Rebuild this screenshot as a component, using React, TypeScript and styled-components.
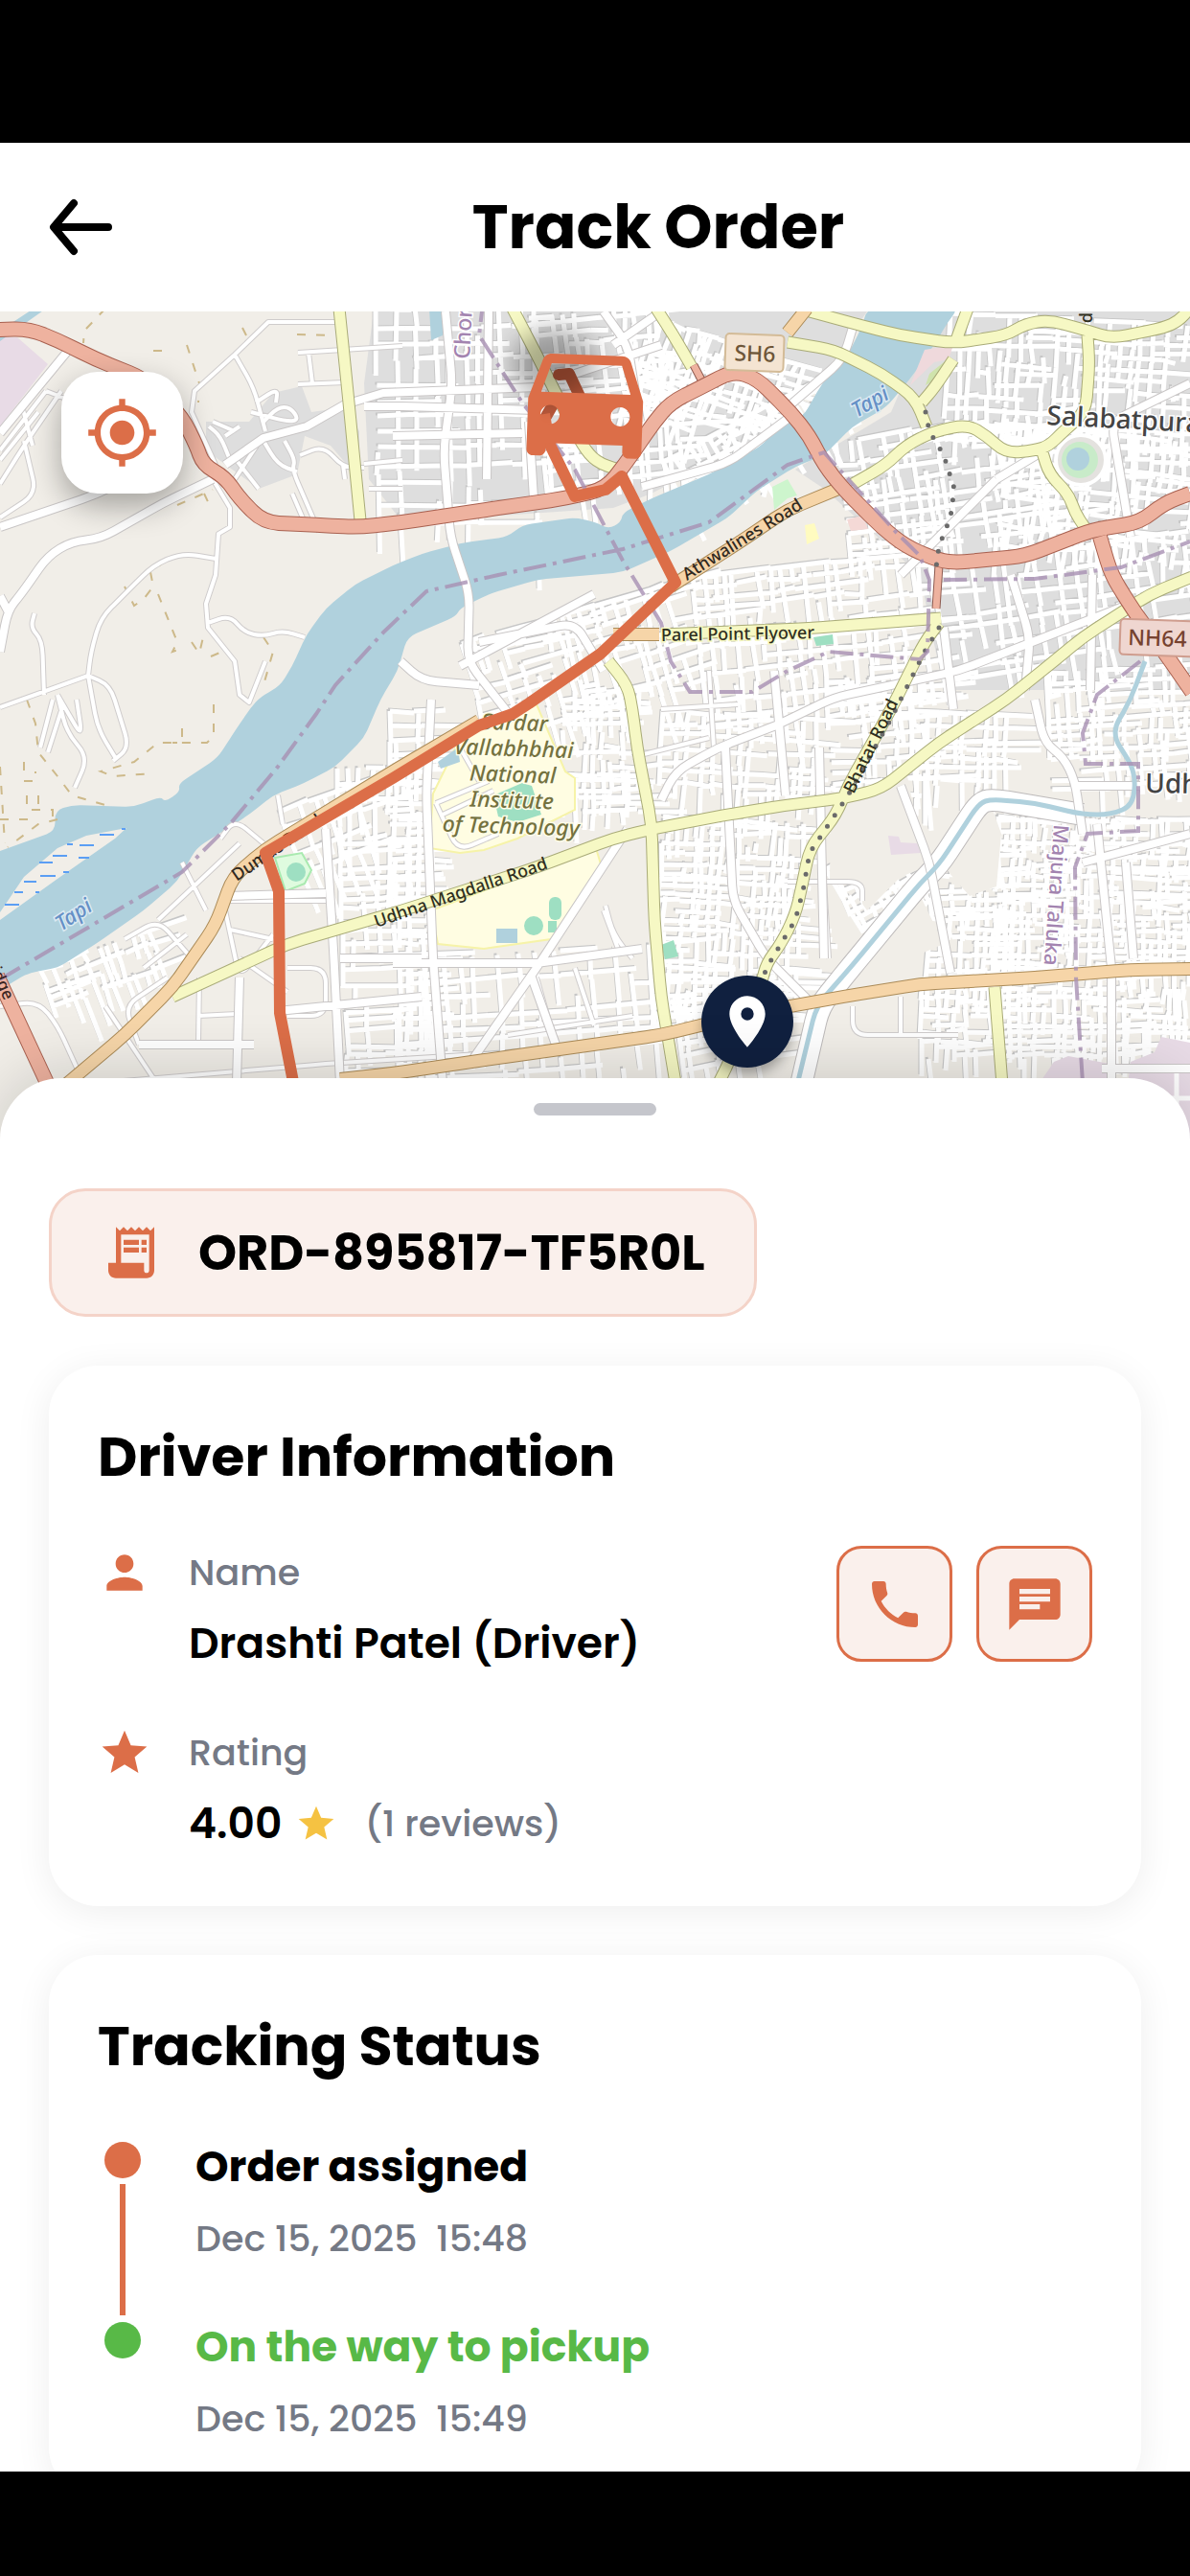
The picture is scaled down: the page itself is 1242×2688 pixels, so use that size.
import React from "react";
import styled, { createGlobalStyle } from "styled-components";
import {
  MdChat,
  MdDirectionsCar,
  MdLocationOn,
  MdMyLocation,
  MdPerson,
  MdPhone,
  MdReceiptLong,
  MdStar,
} from "react-icons/md";

const color = {
  accent: "#dc6e48",
  accentSoft: "#faf0ec",
  accentLine: "#f4d3c8",
  ink: "#000000",
  muted: "#747985",
  success: "#58b947",
  gold: "#f5c242",
  navy: "#10203f",
  handle: "#c5c6cc",
};

const GlobalStyle = createGlobalStyle`
  *, *::before, *::after { box-sizing: border-box; }
  body { margin: 0; background: #000; }
  button { font: inherit; cursor: pointer; }
  h1, h2, p, dl, dt, dd, ol { margin: 0; padding: 0; }
`;

const Screen = styled.div`
  display: flex;
  flex-direction: column;
  height: 100vh;
  overflow: hidden;
  background: #fff;
  color: ${color.ink};
  font-family: Poppins, Inter, "Noto Sans", sans-serif;
`;

const SystemBar = styled.div<{ $size: number }>`
  flex: none;
  height: ${(p) => p.$size}px;
  background: #000;
`;

const Header = styled.header`
  flex: none;
  display: flex;
  align-items: center;
  height: 176px;
  background: #fff;
`;

const BackButton = styled.button`
  display: flex;
  align-items: center;
  width: 132px;
  height: 100%;
  padding: 0 0 0 51px;
  border: 0;
  background: none;
  color: ${color.ink};
`;

const PageTitle = styled.h1`
  flex: 1;
  text-align: center;
  font-size: 64px;
  line-height: 88px;
  font-weight: 700;
`;

const MapArea = styled.section`
  flex: none;
  position: relative;
  height: 864px;
  margin-bottom: -64px;
  overflow: hidden;
  background: #f1eee8;
`;

const MapSvg = styled.svg`
  display: block;
  width: 100%;
  height: 100%;
`;

const LocateButton = styled.button`
  position: absolute;
  top: 63px;
  left: 64px;
  display: flex;
  align-items: center;
  justify-content: center;
  width: 127px;
  height: 127px;
  padding: 0;
  border: 0;
  border-radius: 38px;
  background: #fff;
  color: ${color.accent};
  box-shadow: 0 13px 32px rgba(0, 0, 0, 0.32);
`;

const Sheet = styled.main`
  flex: 1;
  min-height: 0;
  position: relative;
  overflow: hidden;
  padding: 26px 51px 0;
  border-radius: 64px 64px 0 0;
  background: #fff;
  box-shadow: 0 -6px 64px rgba(0, 0, 0, 0.16);
`;

const Handle = styled.div`
  width: 128px;
  height: 13px;
  margin: 0 auto 76px;
  border-radius: 7px;
  background: ${color.handle};
`;

const SheetBody = styled.div`
  display: flex;
  flex-direction: column;
  align-items: stretch;
  gap: 51px;
`;

const OrderChip = styled.div`
  align-self: flex-start;
  display: flex;
  align-items: center;
  gap: 38px;
  height: 134px;
  padding: 0 51px;
  border: 3px solid ${color.accentLine};
  border-radius: 38px;
  background: ${color.accentSoft};
  font-size: 51px;
  line-height: 66px;
  font-weight: 700;

  svg { color: ${color.accent}; }
`;

const Card = styled.section`
  padding: 51px 51px 53px;
  border-radius: 51px;
  background: #fff;
  box-shadow: 0 6px 38px rgba(0, 0, 0, 0.07);
`;

const CardTitle = styled.h2`
  margin-bottom: 49px;
  font-size: 57px;
  line-height: 88px;
  font-weight: 700;
`;

const DriverBody = styled.div`
  display: flex;
  justify-content: space-between;
  align-items: flex-start;
`;

const Facts = styled.dl`
  display: flex;
  flex-direction: column;
  gap: 53px;
`;

const Fact = styled.div`
  display: grid;
  grid-template-columns: 56px auto;
  column-gap: 39px;
  row-gap: 13px;

  > svg { color: ${color.accent}; }
`;

const Label = styled.dt`
  font-size: 38px;
  line-height: 56px;
  font-weight: 500;
  color: ${color.muted};
`;

const Value = styled.dd`
  grid-column: 2;
  display: flex;
  align-items: center;
  gap: 14px;
  font-size: 44px;
  line-height: 66px;
  font-weight: 600;

  svg { color: ${color.gold}; }
`;

const Reviews = styled.span`
  margin-left: 14px;
  font-size: 38px;
  font-weight: 500;
  color: ${color.muted};
`;

const Actions = styled.div`
  display: flex;
  gap: 25px;
`;

const ActionButton = styled.button`
  display: flex;
  align-items: center;
  justify-content: center;
  width: 121px;
  height: 121px;
  padding: 0;
  border: 3px solid ${color.accent};
  border-radius: 26px;
  background: ${color.accentSoft};
  color: ${color.accent};
`;

const Timeline = styled.ol`
  list-style: none;
`;

const Step = styled.li`
  display: flex;
  gap: 51px;
`;

const Rail = styled.div`
  display: flex;
  flex-direction: column;
  align-items: center;
  gap: 6px;
  width: 51px;
  padding-top: 7px;
`;

const Dot = styled.span<{ $done: boolean }>`
  width: 38px;
  height: 38px;
  border-radius: 50%;
  background: ${(p) => (p.$done ? color.accent : color.success)};
`;

const Connector = styled.span`
  flex: 1;
  width: 6px;
  background: ${color.accent};
`;

const StepText = styled.div<{ $last: boolean }>`
  display: flex;
  flex-direction: column;
  gap: 14px;
  padding-bottom: ${(p) => (p.$last ? 0 : 52)}px;
`;

const StepName = styled.p<{ $done: boolean }>`
  font-size: 44px;
  line-height: 66px;
  font-weight: 700;
  color: ${(p) => (p.$done ? color.ink : color.success)};
`;

const StepTime = styled.time`
  font-size: 38px;
  line-height: 56px;
  font-weight: 500;
  white-space: pre;
  color: ${color.muted};
`;

/* ---------- map drawing ---------- */

function random(seed: number) {
  let s = seed;
  return () => {
    s = (s * 1664525 + 1013904223) % 4294967296;
    return s / 4294967296;
  };
}

type District = { x: number; y: number; w: number; h: number; angle: number; step: number; seed: number };

/** Broken, jittered grid of lanes that fills one district. */
function lanes({ w, h, step, seed }: District) {
  const r = random(seed);
  let d = "";
  for (let a = 0; a < h; a += step * (0.55 + r() * 0.9)) {
    for (let b = 0; b < w; ) {
      const len = step * (1 + r() * 5);
      if (r() > 0.2) d += `M${b.toFixed(0)} ${a.toFixed(0)}l${len.toFixed(0)} ${(r() * 6 - 3).toFixed(0)}`;
      b += len;
    }
  }
  for (let a = 0; a < w; a += step * (0.55 + r() * 0.9)) {
    for (let b = 0; b < h; ) {
      const len = step * (1 + r() * 4);
      if (r() > 0.25) d += `M${a.toFixed(0)} ${b.toFixed(0)}l${(r() * 6 - 3).toFixed(0)} ${len.toFixed(0)}`;
      b += len;
    }
  }
  return d;
}

type Point = [number, number];

/** Rounds the corners of a polyline path that uses M, H, V and plain points. */
function rounded(d: string, radius = 16) {
  const tokens = d.match(/[MHVZ]|-?\d+/g) ?? [];
  const runs: Point[][] = [];
  let closed = "";
  for (let i = 0; i < tokens.length; ) {
    const t = tokens[i];
    const run = runs[runs.length - 1];
    if (t === "M") {
      runs.push([]);
      i += 1;
    } else if (t === "H") {
      run.push([Number(tokens[i + 1]), run[run.length - 1][1]]);
      i += 2;
    } else if (t === "V") {
      run.push([run[run.length - 1][0], Number(tokens[i + 1])]);
      i += 2;
    } else if (t === "Z") {
      closed = "Z";
      i += 1;
    } else {
      run.push([Number(t), Number(tokens[i + 1])]);
      i += 2;
    }
  }
  const toward = (from: Point, to: Point): Point => {
    const dist = Math.hypot(to[0] - from[0], to[1] - from[1]) || 1;
    const k = Math.min(radius, dist / 2) / dist;
    return [from[0] + (to[0] - from[0]) * k, from[1] + (to[1] - from[1]) * k];
  };
  const put = (p: Point) => `${p[0].toFixed(1)} ${p[1].toFixed(1)}`;
  return runs
    .map((pts) => {
      let out = `M${put(pts[0])}`;
      for (let i = 1; i < pts.length - 1; i++) {
        out += `L${put(toward(pts[i], pts[i - 1]))}Q${put(pts[i])} ${put(toward(pts[i], pts[i + 1]))}`;
      }
      return `${out}L${put(pts[pts.length - 1])}${closed}`;
    })
    .join("");
}

const districts: District[] = [
  { x: 390, y: 320, w: 170, h: 225, angle: -1, step: 17, seed: 3 },
  { x: 550, y: 330, w: 150, h: 190, angle: -6, step: 12, seed: 7 },
  { x: 680, y: 330, w: 170, h: 110, angle: 18, step: 10, seed: 11 },
  { x: 690, y: 480, w: 190, h: 60, angle: -28, step: 10, seed: 13 },
  { x: 990, y: 325, w: 260, h: 130, angle: 3, step: 10, seed: 17 },
  { x: 870, y: 460, w: 220, h: 120, angle: -8, step: 11, seed: 19 },
  { x: 1050, y: 440, w: 210, h: 130, angle: 6, step: 10, seed: 23 },
  { x: 720, y: 600, w: 260, h: 160, angle: -6, step: 12, seed: 29 },
  { x: 970, y: 590, w: 280, h: 130, angle: -8, step: 15, seed: 31 },
  { x: 480, y: 670, w: 230, h: 110, angle: -16, step: 11, seed: 37 },
  { x: 405, y: 740, w: 50, h: 200, angle: 0, step: 11, seed: 41 },
  { x: 415, y: 955, w: 45, h: 175, angle: 0, step: 12, seed: 42 },
  { x: 585, y: 720, w: 85, h: 130, angle: 0, step: 10, seed: 43 },
  { x: 690, y: 740, w: 165, h: 90, angle: 3, step: 12, seed: 47 },
  { x: 690, y: 850, w: 150, h: 210, angle: 3, step: 9, seed: 48 },
  { x: 350, y: 800, w: 90, h: 330, angle: -2, step: 13, seed: 53 },
  { x: 290, y: 845, w: 90, h: 80, angle: -20, step: 14, seed: 59 },
  { x: 440, y: 1000, w: 250, h: 130, angle: -4, step: 18, seed: 61 },
  { x: 860, y: 710, w: 110, h: 110, angle: -4, step: 11, seed: 67 },
  { x: 950, y: 740, w: 110, h: 90, angle: 2, step: 12, seed: 71 },
  { x: 1090, y: 700, w: 160, h: 130, angle: -3, step: 10, seed: 73 },
  { x: 1040, y: 850, w: 210, h: 170, angle: 1, step: 8, seed: 79 },
  { x: 860, y: 905, w: 80, h: 90, angle: -30, step: 9, seed: 83 },
  { x: 970, y: 910, w: 90, h: 120, angle: 2, step: 8, seed: 89 },
  { x: 960, y: 1030, w: 290, h: 75, angle: 0, step: 8, seed: 97 },
  { x: 40, y: 1010, w: 120, h: 45, angle: -20, step: 10, seed: 101 },
  { x: 700, y: 1040, w: 80, h: 90, angle: -10, step: 11, seed: 103 },
];

const thinRoads = [
  "M350 336H280L245 370 203 408 200 430 225 485",
  "M245 370 265 405 277 450",
  "M311 368 420 361M311 401 360 399M322 368 326 400",
  "M222 500 240 530V550L228 557 225 600 215 630 217 655 245 690 250 725 260 733 277 690",
  "M225 583 190 577 160 590 130 620 105 645 95 680 92 705",
  "M217 650 240 642 255 660 275 664 295 658 318 665",
  "M92 705 0 738M92 705 102 760 120 790M92 705 115 715 135 780 118 794",
  "M36 640 32 655 44 668 46 725",
  "M60 725 70 765 92 790 78 822M80 730 86 770 60 725",
  "M55 730 42 780M66 735 50 785",
  "M64 408 25 465 0 505M48 408 0 470M48 408 66 415M40 430 0 480M25 460 38 515 0 540M22 420 34 465",
  "M313 475 338 465 358 488H380M358 485 360 500M297 460 308 480 305 490 333 555M305 515 317 543",
  "M385 510H420M380 484 420 480M262 430 300 440 312 438 303 425 290 425 275 440",
  "M268 465 245 500M275 460 290 485 310 492M245 478 270 510M288 420 290 405 267 420",
  "M218 445 230 455 240 480M222 440 245 450M235 455 250 445",
  "M175 1020 130 1050 145 1090M190 900 215 950M240 940H340M235 950 250 1020 285 975",
  "M130 980 165 960 200 1000M165 960 250 880M150 1010 195 975",
  "M208 1020 207 1090M207 1060 247 1058M110 1050 160 1125M300 1010H340V1060H300M250 1000 300 1035",
  "M230 875 245 855 275 880M290 830 295 860M240 970 285 980",
  "M0 1050 40 1045 60 1070 85 1125M105 1130 340 1110 500 1100",
  "M690 740 770 735M660 790 740 770M740 700 745 780M630 950 645 990M632 945 640 975 660 1000",
  "M822 920 900 920 900 940M860 920 865 1000M890 1050V1080H1000M940 1040V1080",
  "M560 1020 580 1090M530 1080 660 1060M600 1010 620 1070",
  "M455 838 478 888 520 870M455 838 510 815M462 850 515 825M480 780 500 815",
];

const wideRoads = [
  "M70 367 0 452",
  "M0 550 100 516 165 485",
  "M222 500 170 525 105 562 75 565 50 580 22 620 8 637 0 680M8 637 0 622",
  "M235 485 275 457 320 445 360 422 400 410 560 404M380 424H420L560 428",
  "M465 325 472 400 463 470 470 560 490 620 488 690 535 750",
  "M510 325 508 500M552 440 557 520M410 455 545 452",
  "M630 325 655 360 668 440M600 390 690 360M690 325 640 360",
  "M670 508 760 483 822 437M822 425 880 375 892 335",
  "M418 690 440 710 500 715M480 695 620 620M500 670 600 650 630 700",
  "M810 757 750 780 705 805 690 835M810 757 870 728 1000 700 1180 630",
  "M757 780 765 940 800 1000 850 1050M808 700 820 830",
  "M655 865 560 1010 490 1110",
  "M410 1005H560L670 990M555 1020 580 1090",
  "M450 730 445 830 452 1000 462 1130",
  "M340 865 348 990 355 1130M355 1000 440 1000M290 1055 440 1040",
  "M250 1020 247 1130M145 1090H265M237 935 340 932",
  "M1055 600 1075 665 1070 720M985 655 995 740M1138 720 1140 600",
  "M1080 730 1090 775 1110 790 1122 815 1130 870M1120 820H1190M1145 860 1160 1010M940 820 970 900 992 1015",
  "M1130 900 1242 870M1175 900 1183 1000M1160 1020V1130M1150 1115H1242",
  "M1040 500 1090 470M940 600 1040 500M1180 560 1160 440 1242 400",
  "M855 780 860 1000",
];

const trunkRoads = [
  "M-2 344 30 343 60 355 100 375 150 395 190 435 205 465 212 485 235 498 250 520 275 545 330 548 375 550 420 545 500 533 590 520 632 510 652 485 683 440 700 420 730 405 765 387 790 395 825 430 845 455 860 485 880 510 920 550 945 570 980 585 1000 587 1070 580 1140 553 1190 545 1215 525 1242 515",
  "M1148 560 1160 600 1185 640 1215 680 1244 722",
  "M-3 1018 50 1132",
];

const yellowRoads = [
  "M354 322 362 400 376 543",
  "M535 322 560 370 580 410 608 465 622 482 645 490",
  "M685 322 703 350 722 383",
  "M845 325 900 340 940 350 995 358 1050 350 1070 338 1095 334 1135 345 1160 353 1215 342 1230 335 1242 322M1010 322 998 355",
  "M822 357 870 365 920 390 955 415 967 445M995 375 975 405 962 420",
  "M890 505 925 485 945 465 975 450 1010 443 1030 455 1050 473 1080 470 1095 465 1110 450 1133 430 1137 380 1135 350",
  "M1088 472 1095 495 1115 515 1122 535 1132 550",
  "M690 662 840 656 982 645",
  "M1244 602 1200 620 1130 665 1100 690 1050 730 980 775 920 823 880 833 822 840 760 850 680 865 640 875 560 905 420 950 300 985 180 1040",
  "M635 690 655 715 660 740 665 780 680 860 683 960 690 1040 705 1130",
  "M980 650 965 670 930 740 885 820 873 850 845 885 838 920 830 955 815 985 800 1005 795 1025 760 1110 750 1130",
  "M1038 1030 1046 1132",
];

const orangeRoads = [
  "M700 612 770 567 822 532 880 508M842 322 822 347",
  "M500 752 415 802 277 886 243 915 225 965 180 1030 130 1080 66 1134",
  "M355 1126 410 1120 520 1104 690 1080 780 1058 880 1040 960 1027 1080 1020 1180 1012 1245 1011",
  "M640 662H688",
];

const boundaries = [
  "M0 1022 190 910 240 860 290 800 330 745 350 715 400 660 445 617 520 600 650 573 740 545 822 485 860 472 935 555 960 580 970 605 968 680 960 688 865 680 822 700 785 722 720 722 700 690 690 650 650 585 600 490 545 420 500 350 503 325",
  "M985 605 1080 604 1170 592 1242 565",
  "M1190 690 1145 725 1130 765 1133 797H1188V867L1135 870 1122 905 1123 1020 1130 1130",
];

const river =
  "M0 888 58 867 57 846 75 840 140 842 168 831 172 837 188 826 186 818 227 791 245 763 262 738 272 727 292 716 305 695 320 662 340 635 370 610 410 590 440 578 480 567 530 560 545 548 600 540 622 545 635 552 648 545 650 535 680 520 740 495 795 465 812 445 838 435 858 400 885 370 900 340 905 322 1000 322 990 335 975 360 950 395 925 425 890 445 860 475 830 487 790 512 760 540 700 575 650 597 560 605 510 620 480 635 476 643 425 665 415 700 397 730 380 770 350 800 318 817 285 830 260 850 205 885 185 920 150 950 100 985 60 1010 30 1015 0 1033Z";

const wetland =
  "M104 871H119M70 881H76M83 882H98M55 893H70M82 895H93M41 900H55M42 914H58M66 910H72M25 920H38M15 931H24M37 931H41M5 944H20M127 865H131";

const scrub =
  "M110 322 88 345 87 358M160 366H172M195 360 208 400 207 420M253 342 258 352M310 349 350 350M185 527 222 511M213 515 220 530M173 585 157 597 160 612 150 625 140 632 130 612M165 620 185 670 180 680 192 676M200 670 208 682 212 665M220 685 232 680M275 665 285 680 275 715M223 735V768L216 775 165 775 140 795 105 805 118 810 160 807M190 760V775H180M28 730 37 755 40 785 60 810 75 830 110 840M25 795V815H37V805M28 830V845H55V855M40 830V850M0 855H30M0 800 5 880M60 855 40 860 8 884";

const route =
  "M568 432 573 462 600 518 632 511 649 497 705 608 627 682 552 734 535 745 500 757 410 812 277 890 291 930 292 1057 307 1134";

function Roads({ paths, fill, edge, width }: { paths: string[]; fill: string; edge: string; width: number }) {
  const d = paths.map((p) => (p.includes("L") ? p : rounded(p))).join("");
  return (
    <g fill="none" strokeLinejoin="round">
      <path d={d} stroke={edge} strokeWidth={width + 2} />
      <path d={d} stroke={fill} strokeWidth={width} />
    </g>
  );
}

type MapLabel = { x: number; y: number; angle: number; size: number; fill: string; halo?: string; text: string; italic?: boolean };

const labels: MapLabel[] = [
  { x: 1092, y: 443, angle: 3, size: 28, fill: "#444", halo: "#fff", text: "Salabatpura" },
  { x: 1195, y: 827, angle: 1, size: 28, fill: "#444", halo: "#fff", text: "Udhna" },
  { x: 894, y: 436, angle: -30, size: 22, fill: "#6590c6", halo: "#dbe9f2", text: "Tapi", italic: true },
  { x: 64, y: 972, angle: -34, size: 22, fill: "#6590c6", halo: "#dbe9f2", text: "Tapi", italic: true },
  { x: 717, y: 606, angle: -32, size: 18, fill: "#30291f", text: "Athwalines Road" },
  { x: 690, y: 669, angle: -1, size: 18, fill: "#2f2f20", halo: "#f6f8c0", text: "Parel Point Flyover" },
  { x: 247, y: 920, angle: -34, size: 18, fill: "#30291f", text: "Dumas Road" },
  { x: 393, y: 968, angle: -19, size: 18, fill: "#2f2f20", text: "Udhna Magdalla Road" },
  { x: 891, y: 829, angle: -64, size: 18, fill: "#2f2f20", text: "Bhatar Road" },
  { x: 1100, y: 860, angle: 94, size: 22, fill: "#a384b0", halo: "#fff", text: "Majura Taluka" },
  { x: 490, y: 375, angle: -87, size: 23, fill: "#a384b0", halo: "#fff", text: "Chorasi" },
  { x: -10, y: 1012, angle: 66, size: 17, fill: "#3a2522", text: "idge" },
  { x: 1130, y: 326, angle: 90, size: 18, fill: "#2f2f20", text: "p" },
];

const campusLines = ["Sardar", "Vallabhbhai", "National", "Institute", "of Technology"];

function CityMap() {
  return (
    <MapSvg viewBox="0 325 1242 864" preserveAspectRatio="xMidYMid slice" role="img" aria-label="Delivery route map">
      <defs>
        <filter id="soft" x="-50%" y="-50%" width="200%" height="200%">
          <feGaussianBlur stdDeviation="12" />
        </filter>
        <filter id="pinShadow" x="-50%" y="-50%" width="200%" height="200%">
          <feGaussianBlur stdDeviation="7" />
        </filter>
      </defs>

      <rect x="0" y="325" width="1242" height="864" fill="#f1eee8" />
      <path d="M0 352 18 352 50 380 0 445Z" fill="#e8dbe6" />
      <path
        d="M390 325H905L850 405 812 445 680 515 640 530 420 545 385 500 380 400Z"
        fill="#dedede"
      />
      <path d="M975 325H1242V720H1150L985 720 960 600 860 510 830 490 930 430Z" fill="#dedede" />
      <path d="M285 410 315 403 325 430 360 425 375 450V500L345 465 318 455 310 495 270 510 215 470 215 440 260 440Z" fill="#dedede" />

      <g stroke="#c6c6c6" strokeWidth="3" fill="none">
        {districts.map((d) => (
          <path key={d.seed} d={lanes(d)} transform={`translate(${d.x} ${d.y}) rotate(${d.angle})`} />
        ))}
      </g>
      <g stroke="#fff" strokeWidth="5" fill="none">
        {districts.map((d) => (
          <path key={d.seed} d={lanes(d)} transform={`translate(${d.x + 2} ${d.y + 2}) rotate(${d.angle})`} />
        ))}
      </g>

      <g fill="#fffde2" stroke="#f6f3a8" strokeWidth="2">
        <path d="M478 775 510 752 560 735 575 770 590 805 600 812V845L540 875 505 887 480 890 448 885 452 828Z" />
        <path d="M450 950 622 885 628 905 575 980 505 990 457 985Z" />
      </g>
      <g fill="#9edfc2">
        <path d="M515 830 545 817 555 820 565 850 540 858 520 852Z" />
        <circle cx="557" cy="966" r="10" />
        <rect x="573" y="936" width="13" height="24" rx="6" />
        <rect x="572" y="961" width="9" height="12" />
        <path d="M690 986 703 981 708 998 694 1001Z" />
        <path d="M849 665 869 662 870 672 852 674Z" />
      </g>
      <path d="M457 795 478 780 480 795 460 802Z" fill="#b0d1dd" />
      <rect x="518" y="969" width="22" height="15" fill="#b0d1dd" />
      <path d="M867 825 880 830 920 822 945 800 955 850 965 905 940 915 905 950 900 943V922H866Z" fill="#f1eee8" />
      <path d="M1010 855 1035 842 1045 870 1040 925 1012 935 990 910Z" fill="#f1eee8" />
      <path d="M930 960 962 938 985 985 950 1000 945 1022 895 1025 900 1000Z" fill="#f1eee8" />
      <path d="M675 890 672 985 640 990 620 960Z" fill="#f1eee8" />

      <g>
        <path fill="#b0d1dd" d={rounded(river, 10)} />
        <path d="M448 322H462V350L450 355ZM0 345 35 322H48L0 356Z" fill="#b0d1dd" />
        <path d="M0 952 25 915 60 885 90 872 132 864 120 875 60 917 0 960Z" fill="#f1eee8" />
        <path d={wetland} stroke="#5b9ef4" strokeWidth="2" />
        <path d="M965 365 995 360 990 375 975 378 950 402Z" fill="#efd9dc" />
        <path d="M970 390 985 378 978 395 966 402Z" fill="#cfe3ac" />
      </g>
      <path d={scrub} stroke="#cdb98a" strokeWidth="2" strokeDasharray="9 11" fill="none" />

      <circle cx="1128" cy="480" r="26" fill="#e4e2df" stroke="#fff" strokeWidth="4" />
      <circle cx="1127" cy="480" r="19" fill="#c8ebc9" />
      <circle cx="1125" cy="479" r="12" fill="#b0d1dd" />
      <path d="M287 895 315 890 325 908 318 922 298 930Z" fill="#dffbdf" stroke="#a9eab0" strokeWidth="2" />
      <circle cx="309" cy="910" r="10" fill="#9edfc2" />
      <path d="M806 508 822 500 832 517 822 520 808 532Z" fill="#cdf5cd" />
      <g fill="#e8dbe6">
        <path d="M927 872 938 873 940 879 957 880 961 890 930 892Z" />
        <path d="M1085 1130 1100 1108 1115 1102 1158 1110 1162 1189H1085Z" />
        <path d="M1180 1108 1205 1098 1212 1082 1242 1088V1189H1170Z" />
      </g>
      <path d="M1160 1114H1242M1228 1120V1189M1215 1146H1242" stroke="#fff" strokeWidth="5" />
      <path d="M884 542 900 538 906 552 888 554Z" fill="#f4d9d6" />
      <path d="M840 548 850 546 855 562 842 568Z" fill="#fffbc0" />

      <Roads paths={thinRoads} fill="#fff" edge="#cfcccc" width={4} />
      <Roads
        paths={["M836 1132 855 1050 889 1008 960 922 980 902 1022 838 1035 834 1130 850"]}
        fill="#fff"
        edge="#bdbaba"
        width={22}
      />
      <Roads paths={wideRoads} fill="#fff" edge="#c9c6c6" width={8} />
      <path
        d={rounded("M832 1132 852 1050 889 1008 960 922 980 902 1022 838 1035 834 1080 838 1130 850 1160 850 1183 840 1185 805 1160 765 1180 730 1195 690")}
        fill="none"
        stroke="#b0d1dd"
        strokeWidth="5"
      />

      <Roads paths={yellowRoads} fill="#f6f8c4" edge="#a9ab78" width={11} />
      <Roads paths={orangeRoads} fill="#f6d5a8" edge="#ab8b58" width={12} />
      <Roads paths={["M980 590 977 635", "M724 381 735 402"]} fill="#eeb29f" edge="#8d5b50" width={7} />
      <Roads paths={trunkRoads} fill="#eeb29f" edge="#a8604f" width={14} />
      <path
        d="M966 430 970 450 985 475 996 510 992 540 980 570 976 600M980 655 965 680 930 750 885 830 845 890 838 930 830 960 800 1010 790 1040"
        fill="none"
        stroke="#6a6a6a"
        strokeWidth="5"
        strokeLinecap="round"
        strokeDasharray="0 14"
      />
      <g fill="none" stroke="#a890b3" strokeWidth="4" opacity="0.8" strokeDasharray="24 7 4 7">
        {boundaries.map((d) => (
          <path key={d} d={d} />
        ))}
      </g>

      <g fontFamily='"Noto Sans", sans-serif'>
        {labels.map((l) => (
          <text
            key={`${l.text}${l.x}`}
            x={l.x}
            y={l.y}
            fontSize={l.size}
            fontStyle={l.italic ? "italic" : "normal"}
            fontWeight="500"
            fill={l.fill}
            stroke={l.halo ?? "none"}
            strokeWidth="3"
            paintOrder="stroke"
            transform={`rotate(${l.angle} ${l.x} ${l.y})`}
          >
            {l.text}
          </text>
        ))}
        <g transform="rotate(2 535 813)">
          {campusLines.map((line, i) => (
            <text
              key={line}
              x="535"
              y={762 + i * 27}
              fontSize="23"
              fontStyle="italic"
              fontWeight="500"
              textAnchor="middle"
              fill="#74723f"
              stroke="#fffde8"
              strokeWidth="3"
              paintOrder="stroke"
            >
              {line}
            </text>
          ))}
        </g>
        <g transform="rotate(2 788 368)" fontWeight="500">
          <rect x="757" y="349" width="61" height="38" rx="4" fill="#f4e4d2" stroke="#d3bb97" strokeWidth="2" />
          <text x="788" y="377" fontSize="23" textAnchor="middle" fill="#6e5638">SH6</text>
        </g>
        <g transform="rotate(2 1208 665)" fontWeight="500">
          <rect x="1169" y="647" width="84" height="37" rx="4" fill="#efd6d0" stroke="#cf9d8e" strokeWidth="2" />
          <text x="1208" y="674" fontSize="23" textAnchor="middle" fill="#76422f">NH64</text>
        </g>
      </g>

      <path d="M583 391 594 390 610 424M576 424 568 438" fill="none" stroke="#b9583a" strokeWidth="12" strokeLinecap="round" strokeLinejoin="round" />
      <path d={route} fill="none" stroke={color.accent} strokeWidth="12" strokeLinejoin="round" />
      <ellipse cx="578" cy="380" rx="44" ry="38" fill="#000" opacity="0.3" filter="url(#soft)" />
      <g transform="rotate(2 611 424)">
        <MdDirectionsCar x={531} y={337} size={160} color={color.accent} />
      </g>

      <circle cx="780" cy="1074" r="46" fill="#000" opacity="0.35" filter="url(#pinShadow)" />
      <circle cx="780" cy="1066" r="48" fill={color.navy} />
      <MdLocationOn x={748} y={1034} size={64} color="#fff" />
    </MapSvg>
  );
}

/* ---------- screen ---------- */

function BackArrow() {
  return (
    <svg width="67" height="60" viewBox="0 0 67 60" fill="none" stroke="currentColor" strokeWidth="8" strokeLinecap="round" strokeLinejoin="round" aria-hidden="true">
      <path d="M62 30H6M26 5 5 30l21 25" />
    </svg>
  );
}

const steps = [
  { name: "Order assigned", time: "Dec 15, 2025  15:48", done: true },
  { name: "On the way to pickup", time: "Dec 15, 2025  15:49", done: false },
];

export default function App() {
  return (
    <>
      <GlobalStyle />
      <Screen>
        <SystemBar $size={149} />
        <Header>
          <BackButton type="button" aria-label="Back">
            <BackArrow />
          </BackButton>
          <PageTitle>Track Order</PageTitle>
        </Header>

        <MapArea>
          <CityMap />
          <LocateButton type="button" aria-label="Show my location">
            <MdMyLocation size={77} />
          </LocateButton>
        </MapArea>

        <Sheet>
          <Handle />
          <SheetBody>
            <OrderChip>
              <MdReceiptLong size={64} />
              ORD-895817-TF5R0L
            </OrderChip>

            <Card>
              <CardTitle>Driver Information</CardTitle>
              <DriverBody>
                <Facts>
                  <Fact>
                    <MdPerson size={56} />
                    <Label>Name</Label>
                    <Value>Drashti Patel (Driver)</Value>
                  </Fact>
                  <Fact>
                    <MdStar size={56} />
                    <Label>Rating</Label>
                    <Value>
                      4.00
                      <MdStar size={44} />
                      <Reviews>(1 reviews)</Reviews>
                    </Value>
                  </Fact>
                </Facts>
                <Actions>
                  <ActionButton type="button" aria-label="Call driver">
                    <MdPhone size={64} />
                  </ActionButton>
                  <ActionButton type="button" aria-label="Message driver">
                    <MdChat size={64} />
                  </ActionButton>
                </Actions>
              </DriverBody>
            </Card>

            <Card>
              <CardTitle>Tracking Status</CardTitle>
              <Timeline>
                {steps.map((step, i) => {
                  const last = i === steps.length - 1;
                  return (
                    <Step key={step.name}>
                      <Rail>
                        <Dot $done={step.done} />
                        {!last && <Connector />}
                      </Rail>
                      <StepText $last={last}>
                        <StepName $done={step.done}>{step.name}</StepName>
                        <StepTime>{step.time}</StepTime>
                      </StepText>
                    </Step>
                  );
                })}
              </Timeline>
            </Card>
          </SheetBody>
        </Sheet>
        <SystemBar $size={109} />
      </Screen>
    </>
  );
}
